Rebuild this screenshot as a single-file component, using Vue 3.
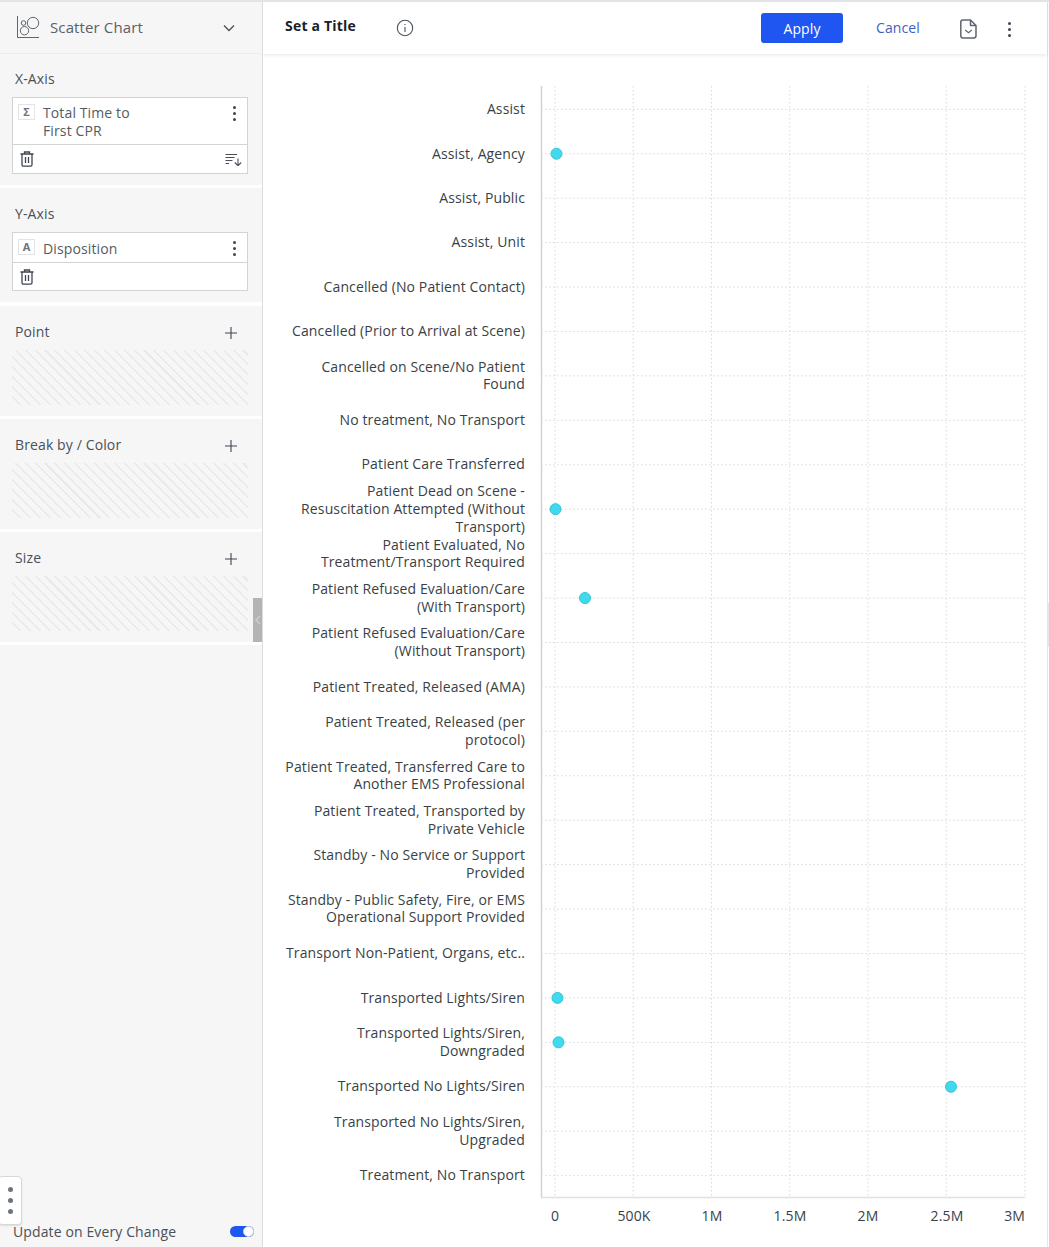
<script setup>
const labels = [
  ['Assist'], ['Assist, Agency'], ['Assist, Public'], ['Assist, Unit'],
  ['Cancelled (No Patient Contact)'], ['Cancelled (Prior to Arrival at Scene)'],
  ['Cancelled on Scene/No Patient', 'Found'], ['No treatment, No Transport'],
  ['Patient Care Transferred'],
  ['Patient Dead on Scene -', 'Resuscitation Attempted (Without', 'Transport)'],
  ['Patient Evaluated, No', 'Treatment/Transport Required'],
  ['Patient Refused Evaluation/Care', '(With Transport)'],
  ['Patient Refused Evaluation/Care', '(Without Transport)'],
  ['Patient Treated, Released (AMA)'],
  ['Patient Treated, Released (per', 'protocol)'],
  ['Patient Treated, Transferred Care to', 'Another EMS Professional'],
  ['Patient Treated, Transported by', 'Private Vehicle'],
  ['Standby - No Service or Support', 'Provided'],
  ['Standby - Public Safety, Fire, or EMS', 'Operational Support Provided'],
  ['Transport Non-Patient, Organs, etc..'],
  ['Transported Lights/Siren'],
  ['Transported Lights/Siren,', 'Downgraded'],
  ['Transported No Lights/Siren'],
  ['Transported No Lights/Siren,', 'Upgraded'],
  ['Treatment, No Transport']
]
const originX = 541
const originY = 86
const gridX = [555, 633.2, 711.5, 789.7, 868, 946.2, 1025].map(v => v - originX)
const gridY = labels.map((_, i) => 109.3 - originY + i * 44.43)
const ticks = [
  { t: '0', x: 555, a: 'middle' }, { t: '500K', x: 634, a: 'middle' },
  { t: '1M', x: 712, a: 'middle' }, { t: '1.5M', x: 790, a: 'middle' },
  { t: '2M', x: 868, a: 'middle' }, { t: '2.5M', x: 947, a: 'middle' },
  { t: '3M', x: 1025, a: 'end' }
].map(k => ({ ...k, x: k.x - originX }))
const points = [
  { x: 556.5, r: 1 }, { x: 555.5, r: 9 }, { x: 585, r: 11 },
  { x: 557.5, r: 20 }, { x: 558.5, r: 21 }, { x: 951, r: 22 }
].map(p => ({ cx: p.x - originX, cy: gridY[p.r] }))
const emptySections = ['Point', 'Break by / Color', 'Size']
</script>

<template>
  <div class="page">
    <aside class="side">
      <header class="side-head">
        <svg class="chart-ico" width="24" height="24" viewBox="0 0 24 24" fill="none" stroke="#5f6670" stroke-width="1">
          <path d="M1.5 1v21.500H23" />
          <circle cx="7.500" cy="8" r="2.300" />
          <circle cx="17" cy="8" r="5.700" />
          <circle cx="8.500" cy="15.700" r="4.200" />
        </svg>
        <span class="side-title">Scatter Chart</span>
        <svg class="chev" width="12" height="8" viewBox="0 0 12 8" fill="none" stroke="#4a5058" stroke-width="1.3"><path d="M1 1.500l5 5 5-5" /></svg>
      </header>

      <section class="sec sec-x">
        <div class="sec-label">X-Axis</div>
        <div class="field">
          <div class="field-top tall">
            <span class="type">Σ</span>
            <span class="field-name">Total Time to<br />First CPR</span>
            <span class="kebab"><i></i><i></i><i></i></span>
          </div>
          <div class="field-bottom">
            <svg class="trash" width="14" height="16" viewBox="0 0 14 16" fill="none" stroke="#3f4650" stroke-width="1.300">
              <path d="M0.500 3h13M4.500 3V1h5v2M2 3v10.800a1.300 1.300 0 0 0 1.300 1.300h7.400a1.300 1.300 0 0 0 1.300-1.300V3M5.500 6v6M8.500 6v6" />
            </svg>
            <svg width="18" height="13" viewBox="0 0 18 13" fill="none" stroke="#4a5058" stroke-width="1.100">
              <path d="M0.500 1.500h11.500M0.500 4.500h9M0.500 7.500h7M0.500 10.500h3.500M13 5.500v7M9.800 9.500l3.200 3.200 3.200-3.200" />
            </svg>
          </div>
        </div>
      </section>

      <section class="sec sec-y">
        <div class="sec-label">Y-Axis</div>
        <div class="field">
          <div class="field-top">
            <span class="type">A</span>
            <span class="field-name low">Disposition</span>
            <span class="kebab"><i></i><i></i><i></i></span>
          </div>
          <div class="field-bottom short">
            <svg class="trash" width="14" height="16" viewBox="0 0 14 16" fill="none" stroke="#3f4650" stroke-width="1.300">
              <path d="M0.500 3h13M4.500 3V1h5v2M2 3v10.800a1.300 1.300 0 0 0 1.300 1.300h7.400a1.300 1.300 0 0 0 1.300-1.300V3M5.500 6v6M8.500 6v6" />
            </svg>
          </div>
        </div>
      </section>

      <section v-for="name in emptySections" :key="name" class="sec sec-empty">
        <div class="empty-head">
          <span>{{ name }}</span>
          <svg width="12" height="12" viewBox="0 0 12 12" stroke="#3d4650" stroke-width="1.100"><path d="M6 0v12M0 6h12" /></svg>
        </div>
        <div class="hatch"></div>
      </section>

      <div class="collapse">
        <svg width="6" height="10" viewBox="0 0 6 10" fill="none" stroke="#cfcfcf" stroke-width="1.400"><path d="M5 1L1 5l4 4" /></svg>
      </div>

      <div class="side-rest"></div>

      <div class="side-foot">
        <span>Update on Every Change</span>
        <span class="toggle"><i></i></span>
      </div>
      <div class="float-tab"><i></i><i></i><i></i></div>
    </aside>

    <main class="main">
      <header class="top">
        <span class="title">Set a Title</span>
        <svg class="info" width="18" height="18" viewBox="0 0 18 18" fill="none" stroke="#4b525b" stroke-width="1.100">
          <circle cx="9" cy="9" r="7.700" />
          <path d="M9 8v5M9 5v1.300" />
        </svg>
        <span class="grow"></span>
        <button class="apply">Apply</button>
        <span class="cancel">Cancel</span>
        <svg class="doc" width="17" height="20" viewBox="0 0 17 20" fill="none" stroke="#5d6670" stroke-width="1.500">
          <path d="M2.800 1h7.700L16 6.500v10.300a2.200 2.200 0 0 1-2.200 2.200H2.800a2.200 2.200 0 0 1-2-2.200V3.200A2.200 2.200 0 0 1 2.800 1zM10.500 1v5.500H16" stroke-linejoin="round" />
          <path d="M5.200 11l3.300 2.800L11.800 11" stroke-width="1.200" />
        </svg>
        <span class="kebab dark"><i></i><i></i><i></i></span>
      </header>

      <div class="chart">
        <div class="labels">
          <div v-for="(lab, i) in labels" :key="i" class="lab">
            <span v-for="(line, j) in lab" :key="j">{{ line }}</span>
          </div>
        </div>
        <svg class="plot" width="486" height="1150" viewBox="0 0 486 1150">
          <g stroke="#d9d9d9" stroke-width="1" stroke-dasharray="1.500 2.500">
            <line v-for="x in gridX" :key="x" :x1="x" :x2="x" y1="0" y2="1111" />
            <line v-for="y in gridY" :key="y" x1="0" x2="484" :y1="y" :y2="y" />
          </g>
          <path d="M0.500 0V1111.500" fill="none" stroke="#d2d2d2" stroke-width="1.500" />
          <path d="M0 1111.500H484" fill="none" stroke="#e0e0e0" stroke-width="1.500" />
          <circle v-for="p in points" :key="p.cy" :cx="p.cx" :cy="p.cy" r="5.500" fill="#40d9ee" stroke="#33c4d8" stroke-width="1" />
          <text v-for="k in ticks" :key="k.t" :x="k.x" y="1135" :text-anchor="k.a" class="tick">{{ k.t }}</text>
        </svg>
      </div>
    </main>
    <div class="edge-handle"></div>
  </div>
</template>

<style>
html, body { margin: 0; background: #fff; }
</style>

<style scoped>
.page {
  position: relative;
  display: flex;
  width: 1049px;
  height: 1247px;
  overflow: hidden;
  box-sizing: border-box;
  border-top: 2px solid #e4e4e6;
  font-family: "Open Sans", "Liberation Sans", sans-serif;
  font-size: 14px;
  letter-spacing: 0.12px;
  color: #4a5058;
  background: #fff;
}
.side {
  position: relative;
  width: 263px;
  flex: none;
  display: flex;
  flex-direction: column;
  box-sizing: border-box;
  background: #f6f6f6;
  border-right: 1px solid #dcdcdc;
}
.side-head {
  height: 52px;
  flex: none;
  box-sizing: border-box;
  display: flex;
  align-items: center;
  padding: 0 27px 0 16px;
  border-bottom: 1px solid #ececec;
}
.chart-ico { margin-right: 10px; margin-top: -1px; }
.side-title { flex: 1; font-size: 15px; color: #5a6068; margin-top: -2px; }
.sec {
  background: #f6f6f6;
  box-sizing: border-box;
  border-bottom: 3px solid #fff;
  padding: 0 14px 0 12px;
  flex: none;
}
.sec-x { height: 134px; padding-top: 16px; }
.sec-y { height: 118px; padding-top: 17px; border-bottom-width: 4px; }
.sec-label { padding-left: 3px; height: 27px; line-height: 18px; font-size: 14px; }
.field { background: #fff; border: 1px solid #d3d3d3; }
.field-top {
  display: flex;
  align-items: flex-start;
  padding: 6px 11px 3px 5px;
  border-bottom: 1px solid #d3d3d3;
  height: 20px;
}
.field-top.tall { height: 37px; }
.type {
  width: 17px;
  height: 16px;
  flex: none;
  margin-right: 8px;
  box-sizing: border-box;
  border: 1px solid #e3e3e3;
  font-size: 11px;
  font-weight: 700;
  line-height: 14px;
  text-align: center;
  color: #6d737b;
}
.field-name { flex: 1; line-height: 18px; font-size: 14px; color: #555b63; }
.field-name.low { margin-top: 1px; }
.kebab { display: flex; flex-direction: column; gap: 3px; padding-top: 2px; }
.kebab i { width: 3px; height: 3px; border-radius: 50%; background: #3d4650; display: block; }
.field-bottom {
  height: 28px;
  display: flex;
  align-items: center;
  justify-content: space-between;
  padding: 0 4px 0 7px;
}
.field-bottom.short { height: 27px; }
.sec-empty { height: 113px; padding-top: 15px; }
.empty-head {
  display: flex;
  justify-content: space-between;
  align-items: center;
  padding: 0 11px 0 3px;
  height: 20px;
  margin-bottom: 9px;
  font-size: 14px;
}
.empty-head svg { margin-top: 3px; }
.hatch {
  height: 55px;
  background: repeating-linear-gradient(45deg, #f6f6f6 0, #f6f6f6 5.500px, #e9e9e9 5.500px, #e9e9e9 7px);
}
.collapse {
  position: absolute;
  left: 253px;
  top: 596px;
  width: 9px;
  height: 44px;
  background: #b4b4b4;
  display: flex;
  align-items: center;
  justify-content: center;
}
.side-rest { flex: 1; }
.side-foot {
  height: 30px;
  flex: none;
  box-sizing: border-box;
  display: flex;
  align-items: center;
  justify-content: space-between;
  padding: 0 8px 2px 13px;
  font-size: 14px;
}
.toggle {
  position: relative;
  width: 24px;
  height: 11px;
  border-radius: 6px;
  background: #1f55f0;
  margin-top: 1px;
}
.toggle i {
  position: absolute;
  right: 0;
  top: 0;
  box-sizing: border-box;
  width: 11px;
  height: 11px;
  border-radius: 50%;
  background: #fff;
  border: 1px solid #ccd3e0;
}
.float-tab {
  position: absolute;
  left: -2px;
  top: 1174px;
  width: 24px;
  height: 49px;
  box-sizing: border-box;
  background: #fff;
  border: 1px solid #d8d8d8;
  border-radius: 4px;
  display: flex;
  flex-direction: column;
  align-items: center;
  justify-content: center;
  gap: 6px;
  box-shadow: 0 1px 2px rgba(0, 0, 0, 0.1);
}
.float-tab i { width: 5px; height: 5px; border-radius: 50%; background: #6d7480; display: block; }
.main {
  flex: none;
  width: 785px;
  box-sizing: border-box;
  border-right: 1px solid #e6e6e6;
  display: flex;
  flex-direction: column;
}
.top {
  height: 52px;
  flex: none;
  box-sizing: border-box;
  display: flex;
  align-items: center;
  padding: 0 36px 0 22px;
  box-shadow: 0 1px 4px rgba(0, 0, 0, 0.1);
}
.title {
  font-weight: 700;
  font-size: 14px;
  letter-spacing: 0.2px;
  color: #1c2128;
  width: 111px;
  margin-top: -6px;
}
.grow { flex: 1; }
.apply {
  width: 82px;
  height: 30px;
  border: none;
  border-radius: 3px;
  background: #1f55f0;
  color: #fff;
  font: 14px "Open Sans", sans-serif;
  letter-spacing: 0.12px;
  margin-top: 0;
}
.cancel { margin: -2px 40px 0 33px; color: #3f5fbf; font-size: 14px; }
.doc { margin-right: 31px; margin-top: 1px; }
.kebab.dark { padding-top: 3px; }
.chart {
  display: flex;
  align-items: flex-start;
  padding-top: 32px;
  padding-left: 22px;
}
.labels { width: 240px; margin-right: 16px; padding-top: 0.700px; flex: none; }
.lab {
  height: 44.430px;
  display: flex;
  flex-direction: column;
  justify-content: center;
  align-items: flex-end;
  font-size: 14px;
  line-height: 17.600px;
  color: #3a3f46;
  text-align: right;
  white-space: nowrap;
}
.plot { display: block; flex: none; overflow: visible; }
.tick { font: 14px "Open Sans", sans-serif; fill: #3a3f46; }
.edge-handle {
  position: absolute;
  left: 1047px;
  top: 601px;
  width: 2px;
  height: 44px;
  background: #e6e6e6;
}
</style>
